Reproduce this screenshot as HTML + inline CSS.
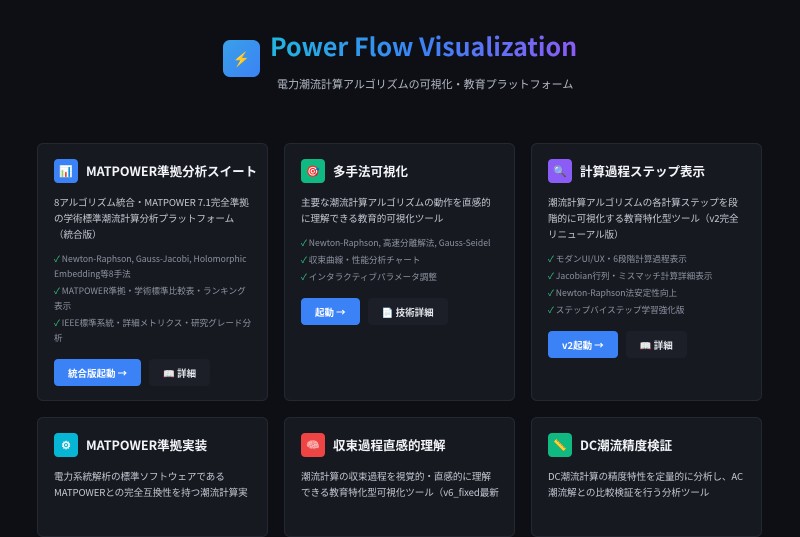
<!DOCTYPE html>
<html><head><meta charset="utf-8">
<style>
*{margin:0;padding:0;box-sizing:border-box}
body{width:800px;height:500px;overflow:hidden;background:#0d0f15;font-family:"Noto Sans CJK JP","Liberation Sans",sans-serif;color:#e6e8ee;position:relative}
.hdr-icon{position:absolute;left:223px;top:40px;width:37px;height:37px;border-radius:7px;background:linear-gradient(135deg,#3aa0e8,#3b82f6);display:flex;align-items:center;justify-content:center;font-size:14px;color:#ffe066}
.title{position:absolute;left:270px;top:28px;font-size:25px;line-height:36px;font-weight:bold;background:linear-gradient(90deg,#22b5e0,#3b82f6 50%,#8b5cf6);-webkit-background-clip:text;background-clip:text;color:transparent;white-space:nowrap}
.sub{position:absolute;left:277px;top:76px;font-size:11px;line-height:16px;color:#b3b8c4;white-space:nowrap}
.card{position:absolute;width:231px;background:#161920;border:1px solid #242831;border-radius:6px;padding:14px 15px 14px 16px}
.ic{width:24px;height:24px;border-radius:4px;display:inline-flex;align-items:center;justify-content:center;font-size:11px;flex:none}
.h{display:flex;align-items:center;gap:8px;font-size:12.5px;line-height:18px;font-weight:bold;color:#f2f4f8;height:26px;white-space:nowrap}
.d{font-size:9.6px;line-height:16px;color:#c3c7d0;margin-top:10px;letter-spacing:-0.1px}
ul{list-style:none;margin-top:10px}
li{font-size:8.6px;line-height:15px;color:#8d93a0;margin-bottom:2px}
li:before{content:"✓ ";color:#34c98a}
.btns{display:flex;gap:8px;margin-top:13px}
.b1{background:#3b82f6;color:#fff;font-size:9.5px;font-weight:bold;height:27px;padding:0 14px;border-radius:4px;display:flex;align-items:center}
.b2{background:#1c1f27;color:#e6e8ee;font-size:9.5px;font-weight:bold;height:27px;padding:0 14px;border-radius:4px;display:flex;align-items:center}
</style></head><body>
<div class="hdr-icon">⚡</div>
<div class="title">Power Flow Visualization</div>
<div class="sub">電力潮流計算アルゴリズムの可視化・教育プラットフォーム</div>

<div class="card" style="left:37px;top:143px;height:258px">
<div class="h"><span class="ic" style="background:#3b82f6">📊</span>MATPOWER準拠分析スイート</div>
<div class="d">8アルゴリズム統合・MATPOWER 7.1完全準拠の学術標準潮流計算分析プラットフォーム（統合版）</div>
<ul><li>Newton-Raphson, Gauss-Jacobi, Holomorphic Embedding等8手法</li><li>MATPOWER準拠・学術標準比較表・ランキング表示</li><li>IEEE標準系統・詳細メトリクス・研究グレード分析</li></ul>
<div class="btns"><div class="b1">統合版起動 →</div><div class="b2">📖 詳細</div></div>
</div>

<div class="card" style="left:284px;top:143px;height:258px">
<div class="h"><span class="ic" style="background:#10b981">🎯</span>多手法可視化</div>
<div class="d">主要な潮流計算アルゴリズムの動作を直感的に理解できる教育的可視化ツール</div>
<ul><li>Newton-Raphson, 高速分離解法, Gauss-Seidel</li><li>収束曲線・性能分析チャート</li><li>インタラクティブパラメータ調整</li></ul>
<div class="btns"><div class="b1">起動 →</div><div class="b2">📄 技術詳細</div></div>
</div>

<div class="card" style="left:531px;top:143px;height:258px">
<div class="h"><span class="ic" style="background:#8b5cf6">🔍</span>計算過程ステップ表示</div>
<div class="d">潮流計算アルゴリズムの各計算ステップを段階的に可視化する教育特化型ツール（v2完全リニューアル版）</div>
<ul><li>モダンUI/UX・6段階計算過程表示</li><li>Jacobian行列・ミスマッチ計算詳細表示</li><li>Newton-Raphson法安定性向上</li><li>ステップバイステップ学習強化版</li></ul>
<div class="btns"><div class="b1">v2起動 →</div><div class="b2">📖 詳細</div></div>
</div>

<div class="card" style="left:37px;top:417px;height:120px">
<div class="h"><span class="ic" style="background:#06b6d4">⚙</span>MATPOWER準拠実装</div>
<div class="d">電力系統解析の標準ソフトウェアであるMATPOWERとの完全互換性を持つ潮流計算実</div>
</div>
<div class="card" style="left:284px;top:417px;height:120px">
<div class="h"><span class="ic" style="background:#ef4444">🧠</span>収束過程直感的理解</div>
<div class="d">潮流計算の収束過程を視覚的・直感的に理解できる教育特化型可視化ツール（v6_fixed最新</div>
</div>
<div class="card" style="left:531px;top:417px;height:120px">
<div class="h"><span class="ic" style="background:#10b981">📏</span>DC潮流精度検証</div>
<div class="d">DC潮流計算の精度特性を定量的に分析し、AC潮流解との比較検証を行う分析ツール</div>
</div>
</body></html>
